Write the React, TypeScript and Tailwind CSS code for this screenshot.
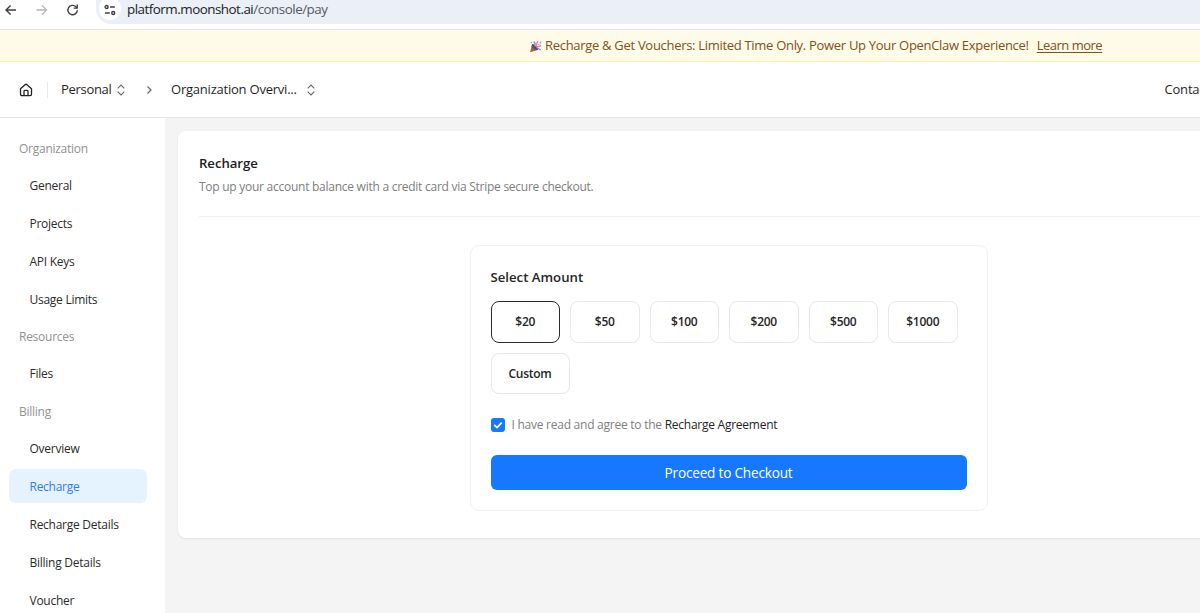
type Section = { title: string; items: string[] };

const sections: Section[] = [
  { title: "Organization", items: ["General", "Projects", "API Keys", "Usage Limits"] },
  { title: "Resources", items: ["Files"] },
  { title: "Billing", items: ["Overview", "Recharge", "Recharge Details", "Billing Details", "Voucher"] },
];

const amounts = ["$20", "$50", "$100", "$200", "$500", "$1000"];

function BrowserBar() {
  return (
    <div className="flex h-[30px] shrink-0 items-start border-b border-[#e4e5e6] bg-white">
      <div className="flex h-[19px] w-[96px] shrink-0 items-center pl-1 text-[#3c4043]">
        <svg className="h-[14px] w-[14px]" viewBox="0 0 14 14" fill="none" stroke="currentColor" strokeWidth="1.4">
          <path d="M12 7H2M6.600 2.400 2 7l4.600 4.600" />
        </svg>
        <svg className="ml-[17px] h-[14px] w-[14px] text-[#b4b6b9]" viewBox="0 0 14 14" fill="none" stroke="currentColor" strokeWidth="1.3">
          <path d="M1.500 7h10M6.900 2.400 11.500 7l-4.600 4.600" />
        </svg>
        <svg className="ml-[17px] h-[14px] w-[14px]" viewBox="0 0 14 14" fill="none" stroke="currentColor" strokeWidth="1.4">
          <path d="M11.300 7.300A4.700 4.700 0 1 1 9.900 3.700l1.300 1.200" />
          <path d="M11.200 1.600v3.500H7.700" />
        </svg>
      </div>
      <div className="flex h-6 flex-1 items-start rounded-bl-[15px] bg-[#ebeff8]">
        <div className="-mt-[3px] ml-[3px] flex h-[23px] w-[22px] items-center justify-center rounded-full bg-white text-[#3c4043]">
          <svg className="mt-[2px] h-3 w-3" viewBox="0 0 12 12" fill="none" stroke="currentColor" strokeWidth="1.400">
            <circle cx="2.600" cy="3" r="1.500" />
            <path d="M6 3h4.800M1 9h4.800" />
            <circle cx="9.200" cy="9" r="1.500" />
          </svg>
        </div>
        <div className="ml-[6px] text-[13.400px] leading-[19px] tracking-[-0.500px] whitespace-nowrap text-[#202124]">
          platform.moonshot.ai<span className="text-[#55585d]">/console/pay</span>
        </div>
      </div>
    </div>
  );
}

function PartyIcon() {
  return (
    <svg className="h-[13px] w-[13px]" viewBox="0 0 13 13" fill="none">
      <path d="M3 4.200 8.800 10 1.100 12.200Z" fill="#9a6a4e" />
      <path d="M2.800 6.400 6.400 10" stroke="#5d4a60" strokeWidth=".9" />
      <ellipse cx="6" cy="7" rx="1.300" ry="4" transform="rotate(-45 6 7)" fill="#57416b" />
      <path d="M5.400 6.200C6.500 5 6 3 4.800 1.500" stroke="#5b9ee4" strokeWidth="1.300" />
      <path d="M6.400 6.600C8 5.400 7.400 3.200 9 1.200" stroke="#dc78a8" strokeWidth="1.300" />
      <path d="M7 7.200c1.400-1.200 3.200-.2 5-1.600" stroke="#e57f80" strokeWidth="1.300" />
      <path d="M7.800 8.400c1.400-.4 2.600.4 3.800 1.600" stroke="#5f92e4" strokeWidth="1.200" />
      <circle cx="2.400" cy="2.600" r=".8" fill="#e57a93" />
      <circle cx="11.400" cy="2.600" r=".9" fill="#8e89e0" />
      <circle cx="9.800" cy="4.400" r=".7" fill="#5fb0e8" />
    </svg>
  );
}

function HomeIcon() {
  return (
    <svg className="h-[14px] w-[14px] text-[#222]" viewBox="0 0 14 14" fill="none" stroke="currentColor" strokeWidth="1.300" strokeLinejoin="round">
      <path d="M1.500 5.800 6 1.700a1.500 1.500 0 0 1 2 0l4.500 4.100V11.200a1.400 1.400 0 0 1-1.400 1.400H2.900a1.400 1.400 0 0 1-1.400-1.400Z" />
      <path d="M5 12.500V8.300a1 1 0 0 1 1-1h2a1 1 0 0 1 1 1v4.200" />
    </svg>
  );
}

function UpDownIcon() {
  return (
    <svg className="h-[12px] w-[10px] text-[#666]" viewBox="0 0 10 12" fill="none" stroke="currentColor" strokeWidth="1.100">
      <path d="M1.700 4.300 5 1l3.300 3.300M1.700 7.700 5 11l3.300-3.300" />
    </svg>
  );
}

function TopNav() {
  return (
    <header className="flex h-[56px] shrink-0 items-center overflow-hidden border-b border-[#e5e5e5] bg-white text-[13px] tracking-[-0.300px] whitespace-nowrap text-[#1f1f1f]">
      <div className="flex w-[47px] shrink-0 items-center pl-[19px]">
        <HomeIcon />
      </div>
      <div className="h-4 w-px bg-[#e8e8e8]" />
      <span className="ml-[13px] w-[55px]">Personal</span>
      <UpDownIcon />
      <svg className="ml-[19px] h-[10px] w-[8px] text-[#666]" viewBox="0 0 8 10" fill="none" stroke="currentColor" strokeWidth="1.200">
        <path d="M2.500 1.500 6 5 2.500 8.500" />
      </svg>
      <span className="ml-[18px] w-[135px] tracking-[-0.220px]">Organization Overvi...</span>
      <UpDownIcon />
      <span className="ml-auto w-[35.500px] shrink-0 tracking-[-0.200px]">Contact</span>
    </header>
  );
}

function Sidebar() {
  return (
    <aside className="w-[165px] shrink-0 overflow-hidden bg-white px-[9px] pt-[13px] text-[12px] tracking-[-0.260px] text-[#2b2b2b]">
      {sections.map((section) => (
        <div key={section.title} className="mb-[3.500px]">
          <div className="flex h-[33px] items-center pt-[2px] pl-[10px] text-[#929292]">{section.title}</div>
          {section.items.map((item) => (
            <div
              key={item}
              className={
                item === "Recharge"
                  ? "my-[3.500px] flex h-[34.500px] w-[138px] items-center rounded-[7px] bg-[#e5f3ff] pt-[2px] pl-[20.500px] text-[#2f7bf6]"
                  : "my-[3.500px] flex h-[34.500px] w-[138px] items-center rounded-[7px] pt-[2px] pl-[20.500px]"
              }
            >
              {item}
            </div>
          ))}
        </div>
      ))}
    </aside>
  );
}

function AmountButton({ label }: { label: string }) {
  if (label === "$20") {
    return <button className="h-[41.500px] w-[69.500px] rounded-[8px] border border-[#2b2b2b] bg-white">{label}</button>;
  }
  return (
    <button
      className={
        label === "Custom"
          ? "h-[41.500px] w-[79px] rounded-[8px] border border-[#e8e8e8] bg-white pt-px"
          : "h-[41.500px] w-[69.500px] rounded-[8px] border border-[#e8e8e8] bg-white"
      }
    >
      {label}
    </button>
  );
}

function RechargeForm() {
  return (
    <div className="ml-[270.500px] h-[266px] w-[518px] rounded-[9px] border border-[#f0f0f0] px-[20px] pt-[20px]">
      <h2 className="text-[13.200px] leading-[22px] font-semibold text-[#262626]">Select Amount</h2>
      <div className="mt-[13px] flex flex-wrap gap-[10px] text-[12px] font-semibold tracking-[-0.250px] text-[#262626]">
        {amounts.map((amount) => (
          <AmountButton key={amount} label={amount} />
        ))}
        <AmountButton label="Custom" />
      </div>
      <label className="mt-[20.500px] flex h-5 items-center text-[12px] tracking-[-0.250px] whitespace-pre text-[#808080]">
        <span className="mr-[7px] flex h-[14px] w-[14px] items-center justify-center rounded-[3px] bg-[#1677ff]">
          <svg className="h-[10px] w-[10px]" viewBox="0 0 10 10" fill="none" stroke="white" strokeWidth="1.700">
            <path d="M1.200 4.900 4 7.600 8.700 2.700" />
          </svg>
        </span>
        I have read and agree to the <span className="text-[#1f1f1f]">Recharge Agreement</span>
      </label>
      <button className="mt-[20.500px] flex h-[34.500px] w-full items-center justify-center rounded-[6px] bg-[#1677ff] pt-[2px] text-[13.600px] tracking-[-0.200px] text-white">
        Proceed to Checkout
      </button>
    </div>
  );
}

export default function App() {
  return (
    <div className="flex h-[613px] w-[1200px] flex-col overflow-hidden bg-white font-['Open_Sans','Noto_Sans',sans-serif]">
      <BrowserBar />
      <div className="flex h-[32px] shrink-0 items-center overflow-hidden border-b border-[#fcf1a4] bg-[#fefbe8] pt-px pl-[529px] text-[13px] tracking-[-0.300px] whitespace-nowrap text-[#81501d]">
        <PartyIcon />
        <span className="ml-[3px]">Recharge &amp; Get Vouchers: Limited Time Only. Power Up Your OpenClaw Experience!</span>
        <a className="ml-[8px] tracking-[-0.500px] underline underline-offset-2">Learn more</a>
      </div>
      <TopNav />
      <div className="flex min-h-0 flex-1">
        <Sidebar />
        <main className="flex-1 overflow-hidden bg-[#f4f4f4] pt-[13px] pl-[13px]">
          <section className="h-[407px] w-[1040px] rounded-[8px] bg-white pt-[21px] pl-[21px] shadow-[0_1px_2px_rgba(0,0,0,0.08)]">
            <h1 className="text-[13.200px] leading-[22px] font-semibold tracking-[-0.050px] text-[#202020]">Recharge</h1>
            <p className="mt-[3px] text-[12px] leading-5 tracking-[-0.260px] text-[#7d7d7d]">
              Top up your account balance with a credit card via Stripe secure checkout.
            </p>
            <div className="mt-[19px] mb-[28px] h-px bg-[#efefef]" />
            <RechargeForm />
          </section>
        </main>
      </div>
    </div>
  );
}
